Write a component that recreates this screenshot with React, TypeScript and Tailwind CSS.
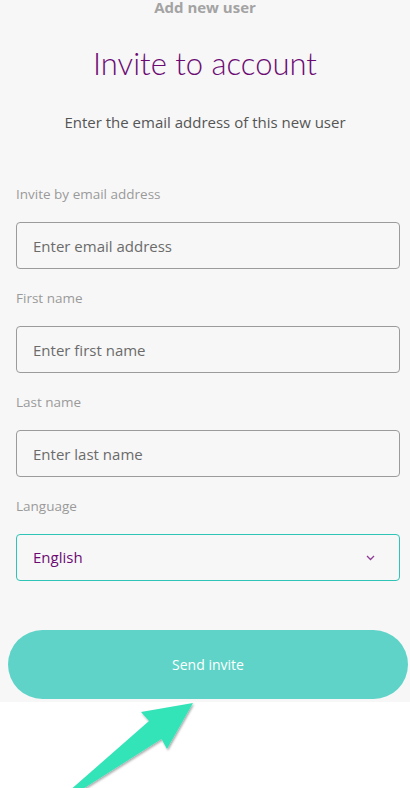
import React from 'react'

const fields = [
  { label: 'Invite by email address', placeholder: 'Enter email address' },
  { label: 'First name', placeholder: 'Enter first name' },
  { label: 'Last name', placeholder: 'Enter last name' }
]

export default function App() {
  return (
    <div className="relative w-[410px] h-[788px] overflow-hidden bg-white font-['Open_Sans',sans-serif]">
      <div className="h-[702px] bg-[#f7f7f7] flex flex-col">
        <p className="mt-[-3px] text-center text-[15px] leading-5 font-bold text-[#a3a3a3]">
          Add new user
        </p>
        <h1 className="mt-[28px] text-center text-[31px] leading-9 font-light text-[#6c0a74] font-['Lato',sans-serif]">
          Invite to account
        </h1>
        <p className="mt-[31px] text-center text-[15px] leading-5 text-[#555]">
          Enter the email address of this new user
        </p>

        <form className="mt-[53px] pl-4 pr-[10px] flex flex-col">
          {fields.map((f) => (
            <div key={f.label} className="flex flex-col mb-5">
              <label className="text-[13.5px] leading-[18px] text-[#9a9a9a] mb-[19px]">{f.label}</label>
              <input
                type="text"
                placeholder={f.placeholder}
                className="h-[47px] rounded-[4px] border border-[#9b9b9b] bg-transparent px-4 text-[15px] text-[#555] placeholder:text-[#6b6b6b] focus:outline-none"
              />
            </div>
          ))}
          <div className="flex flex-col">
            <label className="text-[13.5px] leading-[18px] text-[#9a9a9a] mb-[19px]">Language</label>
            <div className="h-[47px] rounded-[4px] border border-[#2ec4b6] flex items-center justify-between pl-4 pr-[24px]">
              <span className="text-[15px] text-[#6c0a74]">English</span>
              <svg width="9" height="6" viewBox="0 0 9 6" fill="none">
                <path d="M1 1l3.5 3.5L8 1" stroke="#8e3c95" strokeWidth="1.3" />
              </svg>
            </div>
          </div>
        </form>

        <div className="mt-[49px] pl-2">
          <button className="w-[400px] h-[69px] rounded-full bg-[#5fd3c8] text-white text-[14px]">
            Send invite
          </button>
        </div>
      </div>

      <svg className="absolute left-0 top-[690px]" width="410" height="98" viewBox="0 690 410 98">
        <defs>
          <filter id="sh" x="-20%" y="-20%" width="140%" height="140%">
            <feDropShadow dx="1" dy="1.5" stdDeviation="1" floodColor="#000" floodOpacity="0.35" />
          </filter>
        </defs>
        <polygon
          points="193,703 167,749 161.5,739 78,792 68,792 149,721 141,712"
          fill="#33e4b8"
          filter="url(#sh)"
        />
      </svg>
    </div>
  )
}
